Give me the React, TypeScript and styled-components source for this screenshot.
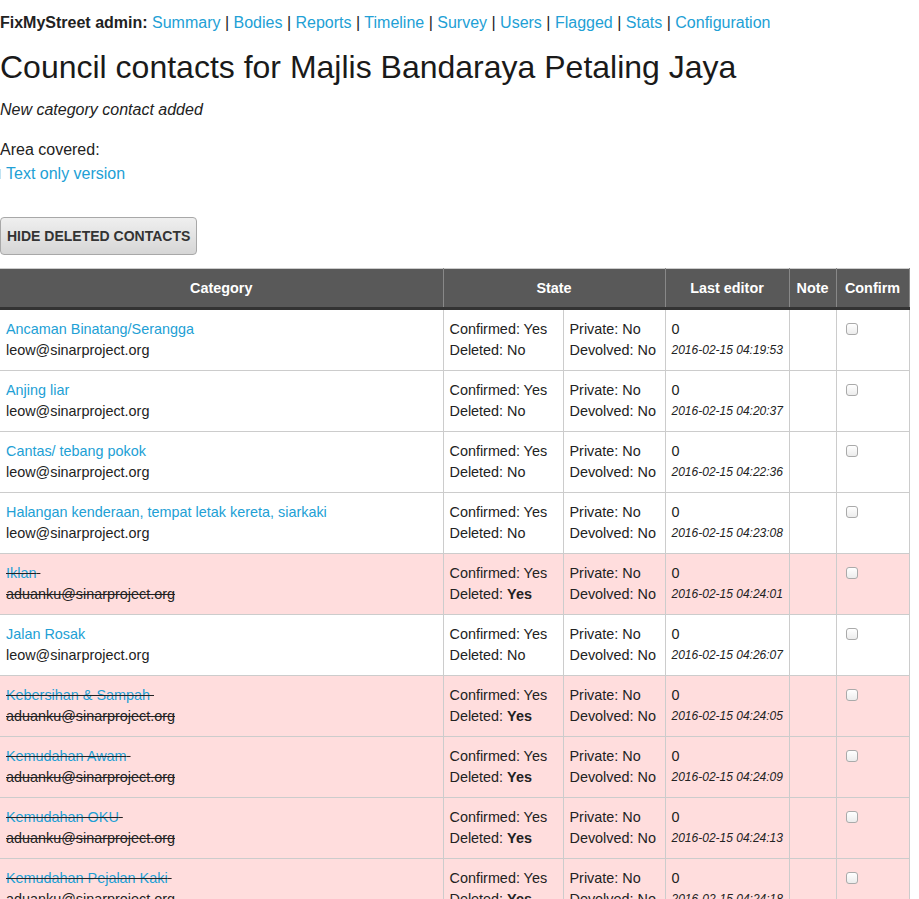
import React from "react";
import styled, { createGlobalStyle } from "styled-components";

const Global = createGlobalStyle`
  html, body { margin: 0; padding: 0; background: #fff; }
  body {
    font-family: "Liberation Sans", Arial, Helvetica, sans-serif;
    color: #222;
    font-size: 16px;
  }
`;

const Page = styled.div`
  width: 919px;
  padding-top: 13px;
`;

const Nav = styled.div`
  font-size: 16px;
  line-height: 20px;
  color: #222;
  white-space: nowrap;
`;

const NavTitle = styled.strong`
  font-weight: bold;
`;

const Link = styled.a`
  color: #22a0d5;
  text-decoration: none;
`;

const Sep = styled.span`
  color: #222;
`;

const Title = styled.h1`
  font-size: 32px;
  font-weight: normal;
  line-height: 38px;
  margin: 15px 0 0 0;
  color: #1a1a1a;
`;

const Message = styled.p`
  font-style: italic;
  font-size: 16px;
  line-height: 20px;
  margin: 14px 0 0 0;
`;

const Area = styled.p`
  font-size: 16px;
  line-height: 20px;
  margin: 20px 0 0 0;
`;

const TextOnly = styled.div`
  display: flex;
  align-items: center;
  gap: 5px;
  font-size: 16px;
  line-height: 20px;
  margin-top: 4px;
`;

const MapEdge = styled.span`
  display: block;
  width: 1px;
  height: 10px;
  background: #bfe3f3;
`;

const Button = styled.button`
  display: block;
  margin-top: 33px;
  height: 38px;
  padding: 0 6px;
  border: 1px solid #a8a8a8;
  border-radius: 4px;
  background: linear-gradient(#efefef, #d6d6d6);
  font-family: "Liberation Sans", Arial, sans-serif;
  font-weight: bold;
  font-size: 14px;
  color: #333;
  text-transform: uppercase;
`;

const Table = styled.table`
  margin-top: 13px;
  width: 909px;
  border-collapse: collapse;
  table-layout: fixed;
  font-size: 14.4px;
  border-top: 1px solid #ccc;
`;

const Col = styled.col<{ $w: number }>`
  width: ${(p) => p.$w}px;
`;

const Th = styled.th`
  background: #595959;
  color: #fff;
  font-weight: bold;
  font-size: 14.4px;
  height: 38px;
  padding: 0 4px;
  text-align: center;
  white-space: nowrap;
  border-left: 1px solid #888;
  border-right: 1px solid #888;
  border-bottom: 3px solid #333;
  &:first-child { border-left: none; }
`;

const Tr = styled.tr<{ $deleted?: boolean }>`
  background: ${(p) => (p.$deleted ? "#ffdddd" : "#fff")};
`;

const Td = styled.td`
  border: 1px solid #ccc;
  padding: 9px 6px 9px 6px;
  vertical-align: top;
  line-height: 21px;
  height: 42px;
  white-space: nowrap;
  overflow: hidden;
  &:first-child { border-left: none; }
`;

const Line = styled.div``;

const Strike = styled.span`
  text-decoration: line-through;
`;

const DateLine = styled.div`
  font-style: italic;
  font-size: 12px;
  line-height: 21px;
`;

const Check = styled.input`
  appearance: none;
  display: block;
  width: 12px;
  height: 12px;
  margin: 4px 0 0 3px;
  border: 1px solid #aaa;
  border-radius: 3px;
  background: linear-gradient(#fff, #ececec);
  box-sizing: border-box;
`;

type Row = { name: string; email: string; deleted: boolean; time: string };

const rows: Row[] = [
  { name: "Ancaman Binatang/Serangga", email: "leow@sinarproject.org", deleted: false, time: "04:19:53" },
  { name: "Anjing liar", email: "leow@sinarproject.org", deleted: false, time: "04:20:37" },
  { name: "Cantas/ tebang pokok", email: "leow@sinarproject.org", deleted: false, time: "04:22:36" },
  { name: "Halangan kenderaan, tempat letak kereta, siarkaki", email: "leow@sinarproject.org", deleted: false, time: "04:23:08" },
  { name: "Iklan", email: "aduanku@sinarproject.org", deleted: true, time: "04:24:01" },
  { name: "Jalan Rosak", email: "leow@sinarproject.org", deleted: false, time: "04:26:07" },
  { name: "Kebersihan & Sampah", email: "aduanku@sinarproject.org", deleted: true, time: "04:24:05" },
  { name: "Kemudahan Awam", email: "aduanku@sinarproject.org", deleted: true, time: "04:24:09" },
  { name: "Kemudahan OKU", email: "aduanku@sinarproject.org", deleted: true, time: "04:24:13" },
  { name: "Kemudahan Pejalan Kaki", email: "aduanku@sinarproject.org", deleted: true, time: "04:24:18" },
];

const navItems = ["Summary", "Bodies", "Reports", "Timeline", "Survey", "Users", "Flagged", "Stats", "Configuration"];

export default function App() {
  return (
    <>
      <Global />
      <Page>
        <Nav>
          <NavTitle>FixMyStreet admin:</NavTitle>{" "}
          {navItems.map((n, i) => (
            <React.Fragment key={n}>
              {i > 0 && <Sep> | </Sep>}
              <Link href="#">{n}</Link>
            </React.Fragment>
          ))}
        </Nav>
        <Title>Council contacts for Majlis Bandaraya Petaling Jaya</Title>
        <Message>New category contact added</Message>
        <Area>Area covered:</Area>
        <TextOnly>
          <MapEdge />
          <Link href="#">Text only version</Link>
        </TextOnly>
        <Button>Hide deleted contacts</Button>
        <Table>
          <colgroup>
            <Col $w={443} />
            <Col $w={120} />
            <Col $w={102} />
            <Col $w={124} />
            <Col $w={47} />
            <Col $w={73} />
          </colgroup>
          <thead>
            <tr>
              <Th>Category</Th>
              <Th colSpan={2}>State</Th>
              <Th>Last editor</Th>
              <Th>Note</Th>
              <Th>Confirm</Th>
            </tr>
          </thead>
          <tbody>
            {rows.map((r) => (
              <Tr key={r.name} $deleted={r.deleted}>
                <Td>
                  {r.deleted ? (
                    <Strike>
                      <Line>
                        <Link href="#">{r.name}</Link>
                        {"\u00a0"}
                      </Line>
                      <Line>{r.email}</Line>
                    </Strike>
                  ) : (
                    <>
                      <Line>
                        <Link href="#">{r.name}</Link>
                      </Line>
                      <Line>{r.email}</Line>
                    </>
                  )}
                </Td>
                <Td>
                  <Line>Confirmed: Yes</Line>
                  <Line>
                    Deleted: {r.deleted ? <strong>Yes</strong> : "No"}
                  </Line>
                </Td>
                <Td>
                  <Line>Private: No</Line>
                  <Line>Devolved: No</Line>
                </Td>
                <Td>
                  <Line>0</Line>
                  <DateLine>2016-02-15 {r.time}</DateLine>
                </Td>
                <Td />
                <Td>
                  <Check type="checkbox" />
                </Td>
              </Tr>
            ))}
          </tbody>
        </Table>
      </Page>
    </>
  );
}
